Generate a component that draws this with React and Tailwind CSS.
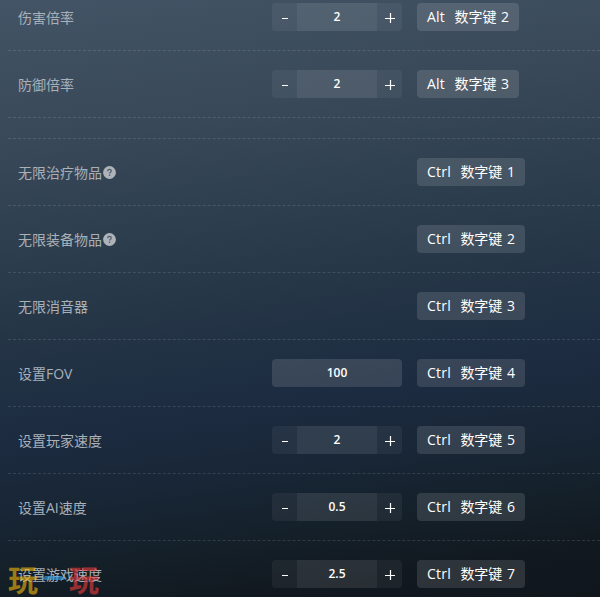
import { useState } from "react";

const scaleRows = [
  { label: "伤害倍率", value: "2", type: "stepper", keys: ["Alt", "数字键 2"] },
  { label: "防御倍率", value: "2", type: "stepper", keys: ["Alt", "数字键 3"] },
];

const cheatRows = [
  { label: "无限治疗物品", help: true, keys: ["Ctrl", "数字键 1"] },
  { label: "无限装备物品", help: true, keys: ["Ctrl", "数字键 2"] },
  { label: "无限消音器", keys: ["Ctrl", "数字键 3"] },
  { label: "设置FOV", value: "100", type: "input", keys: ["Ctrl", "数字键 4"] },
  { label: "设置玩家速度", value: "2", type: "stepper", keys: ["Ctrl", "数字键 5"] },
  { label: "设置AI速度", value: "0.5", type: "stepper", keys: ["Ctrl", "数字键 6"] },
  { label: "设置游戏速度", value: "2.5", type: "stepper", keys: ["Ctrl", "数字键 7"] },
];

const HelpIcon = () => (
  <svg viewBox="0 0 13 13" className="w-[13px] h-[13px] shrink-0 ml-px -mt-0.5">
    <circle cx="6.5" cy="6.5" r="6.4" fill="#adb3b9" />
    <path
      d="M4.7 5.2c0-1.1.8-1.8 1.8-1.8s1.8.7 1.8 1.6c0 1.2-1.7 1.3-1.7 2.6"
      fill="none"
      stroke="#4c5a68"
      strokeWidth="1.2"
    />
    <rect x="5.9" y="8.6" width="1.3" height="1.3" fill="#4c5a68" />
  </svg>
);

const Stepper = ({ initial }) => {
  const [value, setValue] = useState(initial);
  const step = (by) => setValue(String(Number(value) + by));

  return (
    <div className="flex w-[130px] h-7 rounded overflow-hidden text-white">
      <button onClick={() => step(-1)} className="w-[25px] bg-white/5 flex items-center justify-center">
        <span className="w-1.5 h-px bg-white mt-[3px]" />
      </button>
      <div className="w-20 bg-white/10 text-center text-[12px] leading-7 font-semibold">{value}</div>
      <button onClick={() => step(1)} className="w-[25px] bg-white/5 flex items-center justify-center">
        <svg viewBox="0 0 10 10" className="w-2.5 h-2.5 mt-0.5">
          <path d="M0 5.5h10M5.5 0v10" stroke="#fff" strokeWidth="1.2" />
        </svg>
      </button>
    </div>
  );
};

const Row = ({ label, help, value, type, keys }) => (
  <div className="flex items-center h-[67px] shrink-0 pl-2.5 border-b border-dashed border-white/12">
    <div className="w-[254px] flex items-center text-sm text-[#a9b0b8] pt-0.5">
      {label}
      {help && <HelpIcon />}
    </div>
    <div className="w-[145px]">
      {type === "stepper" && <Stepper initial={value} />}
      {type === "input" && (
        <div className="w-[130px] h-7 rounded bg-white/12 text-white text-center text-[12px] leading-7 font-semibold">
          {value}
        </div>
      )}
    </div>
    <div className="flex gap-[9.5px] h-7 px-2.5 rounded bg-white/12 text-white text-sm leading-7 whitespace-nowrap">
      <span className="tracking-[0.2px]">{keys[0]}</span>
      <span className="[word-spacing:1px]">{keys[1]}</span>
    </div>
  </div>
);

const Watermark = () => (
  <div className="absolute left-2 bottom-1 flex items-center opacity-60 text-[30px] leading-[30px] font-bold font-['Noto_Sans_CJK_SC',sans-serif]">
    <span className="text-[#f5b80c]">玩</span>
    <svg viewBox="0 0 31 8" className="w-[31px] h-2">
      <path d="M2 4h3l2-2h17l2 2h3l-4 2H7z" fill="#3fa9e8" />
    </svg>
    <span className="text-[#f03a3a]">玩</span>
  </div>
);

const App = () => {
  return (
    <div className="relative w-[600px] h-[597px] overflow-hidden flex flex-col bg-[linear-gradient(172deg,#435466_0%,#384858_22%,#283949_44%,#1c2b40_65%,#182636_75%,#141f28_85%,#11181f_93%,#10161c_100%)] font-['Open_Sans','Noto_Sans_CJK_SC',sans-serif]">
      <div className="-mt-4 pl-2">
        {scaleRows.map((row) => (
          <Row key={row.label} {...row} />
        ))}
      </div>
      <div className="pl-2 pt-5">
        <div className="border-t border-dashed border-white/12">
          {cheatRows.map((row) => (
            <Row key={row.label} {...row} />
          ))}
        </div>
      </div>
      <Watermark />
    </div>
  );
};

export default App;
